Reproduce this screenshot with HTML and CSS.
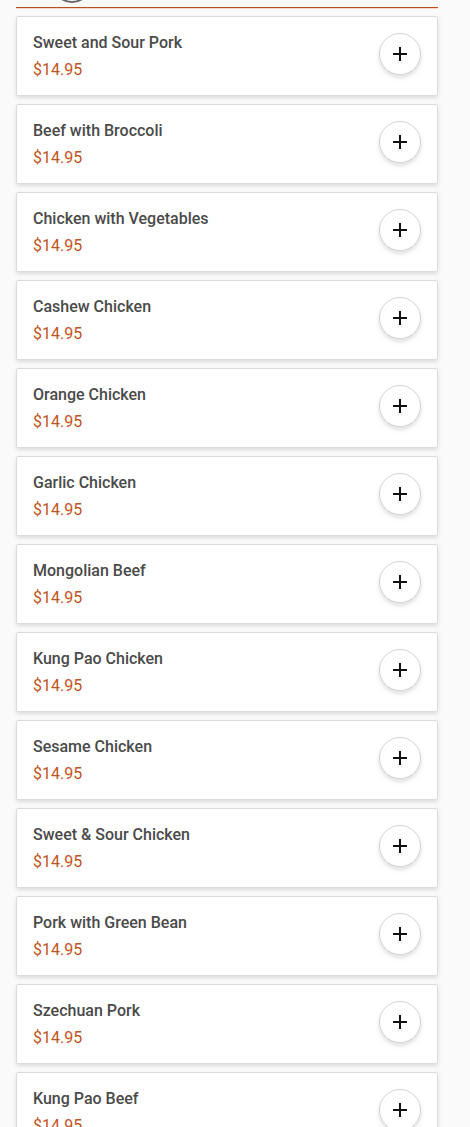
FILE: index.html
```html
<!DOCTYPE html>
<html>

<head>
    <meta charset="UTF-8">
    <meta name="viewport" content="width=device-width, initial-scale=1.0">
    <title>Menu</title>
    <link rel="stylesheet" href="styles.css">
</head>

<body>

    <!-- =========== Header =========== -->
    <div class="header">
        <div class="logo"></div>
    </div>

    <!-- =========== Menu items =========== -->
    <div class="menuList">

        <div class="menuCard">
            <div class="info">
                <p class="name">Sweet and Sour Pork</p>
                <p class="price">$14.95</p>
            </div>
            <button class="addButton"><svg viewBox="0 0 16 16"><path d="M8 1v14M1 8h14"/></svg></button>
        </div>

        <div class="menuCard">
            <div class="info">
                <p class="name">Beef with Broccoli</p>
                <p class="price">$14.95</p>
            </div>
            <button class="addButton"><svg viewBox="0 0 16 16"><path d="M8 1v14M1 8h14"/></svg></button>
        </div>

        <div class="menuCard">
            <div class="info">
                <p class="name">Chicken with Vegetables</p>
                <p class="price">$14.95</p>
            </div>
            <button class="addButton"><svg viewBox="0 0 16 16"><path d="M8 1v14M1 8h14"/></svg></button>
        </div>

        <div class="menuCard">
            <div class="info">
                <p class="name">Cashew Chicken</p>
                <p class="price">$14.95</p>
            </div>
            <button class="addButton"><svg viewBox="0 0 16 16"><path d="M8 1v14M1 8h14"/></svg></button>
        </div>

        <div class="menuCard">
            <div class="info">
                <p class="name">Orange Chicken</p>
                <p class="price">$14.95</p>
            </div>
            <button class="addButton"><svg viewBox="0 0 16 16"><path d="M8 1v14M1 8h14"/></svg></button>
        </div>

        <div class="menuCard">
            <div class="info">
                <p class="name">Garlic Chicken</p>
                <p class="price">$14.95</p>
            </div>
            <button class="addButton"><svg viewBox="0 0 16 16"><path d="M8 1v14M1 8h14"/></svg></button>
        </div>

        <div class="menuCard">
            <div class="info">
                <p class="name">Mongolian Beef</p>
                <p class="price">$14.95</p>
            </div>
            <button class="addButton"><svg viewBox="0 0 16 16"><path d="M8 1v14M1 8h14"/></svg></button>
        </div>

        <div class="menuCard">
            <div class="info">
                <p class="name">Kung Pao Chicken</p>
                <p class="price">$14.95</p>
            </div>
            <button class="addButton"><svg viewBox="0 0 16 16"><path d="M8 1v14M1 8h14"/></svg></button>
        </div>

        <div class="menuCard">
            <div class="info">
                <p class="name">Sesame Chicken</p>
                <p class="price">$14.95</p>
            </div>
            <button class="addButton"><svg viewBox="0 0 16 16"><path d="M8 1v14M1 8h14"/></svg></button>
        </div>

        <div class="menuCard">
            <div class="info">
                <p class="name">Sweet &amp; Sour Chicken</p>
                <p class="price">$14.95</p>
            </div>
            <button class="addButton"><svg viewBox="0 0 16 16"><path d="M8 1v14M1 8h14"/></svg></button>
        </div>

        <div class="menuCard">
            <div class="info">
                <p class="name">Pork with Green Bean</p>
                <p class="price">$14.95</p>
            </div>
            <button class="addButton"><svg viewBox="0 0 16 16"><path d="M8 1v14M1 8h14"/></svg></button>
        </div>

        <div class="menuCard">
            <div class="info">
                <p class="name">Szechuan Pork</p>
                <p class="price">$14.95</p>
            </div>
            <button class="addButton"><svg viewBox="0 0 16 16"><path d="M8 1v14M1 8h14"/></svg></button>
        </div>

        <div class="menuCard">
            <div class="info">
                <p class="name">Kung Pao Beef</p>
                <p class="price">$14.95</p>
            </div>
            <button class="addButton"><svg viewBox="0 0 16 16"><path d="M8 1v14M1 8h14"/></svg></button>
        </div>

    </div>

</body>

</html>
```

FILE: styles.css
```css
* {
    font-family: Roboto, "Liberation Sans", sans-serif;
    margin: 0;
    padding: 0;
    box-sizing: border-box;
}

:root {
    --orange: #c4541e;
    --line: #b4501c;
    --white: #fff;
    --gray: #fafafa;
    --black1: #4a4a4a;
    --border: #dcdcdc;
}

body {
    min-height: 100vh;
    overflow: hidden;
    background: var(--gray);
}

.header {
    display: flow-root;
    width: 422px;
    height: 8px;
    margin-left: 16px;
    border-bottom: 1px solid var(--line);
    box-shadow: 0 1px 0 #f5dacb;
}

.logo {
    width: 40px;
    height: 40px;
    margin-left: 36px;
    margin-top: -37px;
    border: 2px solid #666;
    border-radius: 50%;
    background: var(--white);
}

.menuList {
    width: 422px;
    margin: 8px 0 0 16px;
    display: flex;
    flex-direction: column;
    gap: 8px;
}

.menuCard {
    display: flex;
    align-items: center;
    justify-content: space-between;
    height: 80px;
    padding: 16px 16px 15px 16px;
    background: var(--white);
    border: 1px solid var(--border);
    border-radius: 2px;
    box-shadow: 0 2px 4px rgba(0, 0, 0, 0.12);
}

.info .name {
    font-size: 16px;
    line-height: 20px;
    font-weight: 500;
    color: var(--black1);
}

.info .price {
    margin-top: 7px;
    font-size: 16px;
    line-height: 20px;
    color: var(--orange);
}

.addButton {
    width: 42px;
    height: 42px;
    margin-bottom: 5px;
    border-radius: 50%;
    border: 1px solid #d6d6d6;
    background: var(--white);
    box-shadow: 0 3px 4px rgba(0, 0, 0, 0.12);
    display: flex;
    align-items: center;
    justify-content: center;
}

.addButton svg {
    width: 16px;
    height: 16px;
    stroke: #111;
    stroke-width: 2;
    fill: none;
}
```
